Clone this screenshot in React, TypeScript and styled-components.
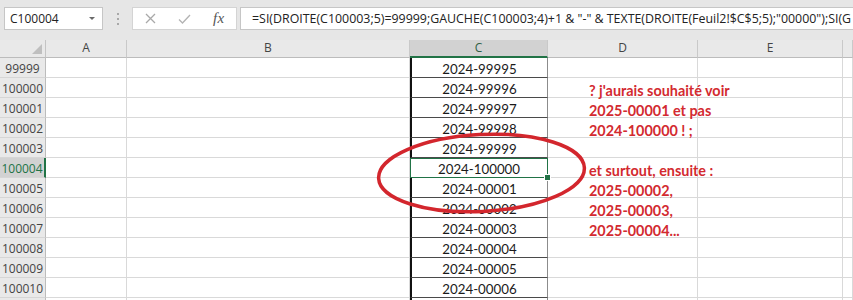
import React from "react";
import styled, { createGlobalStyle, css } from "styled-components";

const GlobalStyle = createGlobalStyle`
  html, body { margin: 0; padding: 0; background: #ffffff; }
  body {
    width: 853px;
    height: 300px;
    overflow: hidden;
    font-family: "Open Sans", "Liberation Sans", sans-serif;
  }
`;

const GREEN = "#217346";

const Page = styled.div`
  width: 853px;
  height: 300px;
  overflow: hidden;
  display: flex;
  flex-direction: column;
  background: #ffffff;
`;

const FormulaBar = styled.div`
  flex: 0 0 40px;
  box-sizing: border-box;
  background: #e6e6e6;
  display: flex;
  align-items: flex-start;
  padding: 7px 0 0 4px;
  overflow: hidden;
`;

const NameBox = styled.div`
  flex: 0 0 99px;
  height: 23px;
  box-sizing: border-box;
  background: #ffffff;
  border: 1px solid #c6c6c6;
  display: flex;
  align-items: center;
  justify-content: space-between;
  padding: 0 7px 0 5px;
  font-size: 12px;
  line-height: 16px;
  color: #222222;
`;

const DropArrow = styled.span`
  width: 0;
  height: 0;
  border-left: 3px solid transparent;
  border-right: 3px solid transparent;
  border-top: 3px solid #6a6a6a;
`;

const Grip = styled.div`
  flex: 0 0 29px;
  height: 23px;
  display: flex;
  flex-direction: column;
  align-items: center;
  justify-content: center;
  gap: 3px;
`;

const GripDot = styled.span`
  width: 2px;
  height: 2px;
  background: #a8a8a8;
`;

const ButtonBox = styled.div`
  flex: 0 0 105px;
  height: 23px;
  box-sizing: border-box;
  background: #ffffff;
  border: 1px solid #d4d4d4;
  display: flex;
  align-items: center;
`;

const BarButton = styled.div`
  flex: 1 1 0;
  height: 100%;
  display: flex;
  align-items: center;
  justify-content: center;
`;

const FxLabel = styled.span`
  font-family: "Liberation Serif", "DejaVu Serif", serif;
  font-style: italic;
  font-size: 15px;
  color: #555555;
  letter-spacing: 0.5px;
`;

const FormulaInput = styled.div`
  flex: 1 0 auto;
  margin-left: 3px;
  margin-right: -30px;
  height: 23px;
  box-sizing: border-box;
  background: #ffffff;
  border: 1px solid #c6c6c6;
  padding: 0 0 0 11px;
  display: flex;
  align-items: center;
  font-size: 12.4px;
  line-height: 16px;
  color: #222222;
  white-space: nowrap;
  overflow: hidden;
`;

const Sheet = styled.div`
  position: relative;
  flex: 1 1 auto;
  display: grid;
  grid-template-columns: 46px 81px 283px 138px 150px 145px 1fr;
  grid-template-rows: 18px;
  grid-auto-rows: 20px;
  overflow: hidden;
  background: #ffffff;
`;

const Corner = styled.div`
  box-sizing: border-box;
  background: #e9e9e9;
  border-right: 1px solid #c4c4c4;
  border-bottom: 1px solid #bcbcbc;
  display: flex;
  justify-content: flex-end;
  align-items: flex-end;
  padding: 0 3px 3px 0;
`;

const CornerTriangle = styled.span`
  width: 0;
  height: 0;
  border-left: 10px solid transparent;
  border-bottom: 10px solid #bfbfbf;
`;

const ColHeader = styled.div<{ $selected?: boolean }>`
  box-sizing: border-box;
  background: #e9e9e9;
  border-right: 1px solid #c9c9c9;
  border-bottom: 1px solid #bcbcbc;
  text-align: center;
  font-size: 12px;
  line-height: 16px;
  color: #444444;
  ${(p) =>
    p.$selected &&
    css`
      background: #d2d2d2;
      color: #2f5f45;
      border-bottom: 2px solid ${GREEN};
    `}
`;

const RowHeader = styled.div<{ $selected?: boolean }>`
  box-sizing: border-box;
  background: #e9e9e9;
  border-right: 1px solid #bcbcbc;
  border-bottom: 1px solid #d6d6d6;
  text-align: center;
  font-size: 12px;
  line-height: 16px;
  padding-top: 3px;
  color: #444444;
  white-space: nowrap;
  overflow: hidden;
  ${(p) =>
    p.$selected &&
    css`
      background: #d2d2d2;
      color: ${GREEN};
      border-right: 2px solid ${GREEN};
    `}
`;

const Cell = styled.div`
  box-sizing: border-box;
  border-right: 1px solid #d9d9d9;
  border-bottom: 1px solid #d9d9d9;
`;

const CCell = styled.div<{ $active?: boolean }>`
  position: relative;
  box-sizing: border-box;
  border-left: 2px solid #111111;
  border-right: 1px solid #8c8c8c;
  border-bottom: 1px solid #4a4a4a;
  text-align: center;
  font-family: "Lato", "Open Sans", sans-serif;
  font-size: 13.3px;
  line-height: 16px;
  padding-top: 3px;
  color: #1a1a1a;
  white-space: nowrap;
  ${(p) =>
    p.$active &&
    css`
      border-left: 1px solid ${GREEN};
      border-right: 1px solid ${GREEN};
      border-bottom: 1px solid ${GREEN};
      box-shadow: inset 0 1px 0 ${GREEN};
      &::after {
        content: "";
        position: absolute;
        right: -4px;
        bottom: -4px;
        width: 5px;
        height: 5px;
        background: ${GREEN};
        border: 1px solid #ffffff;
        z-index: 2;
      }
    `}
`;

const NoteCell = styled.div`
  box-sizing: border-box;
  border-right: 1px solid #d9d9d9;
  border-bottom: 1px solid #d9d9d9;
  padding: 4px 0 0 41px;
  font-family: "Lato", "Open Sans", sans-serif;
  font-weight: 700;
  font-size: 14.4px;
  line-height: 17px;
  color: #d32a30;
  white-space: nowrap;
  overflow: visible;
`;

const Overlay = styled.svg`
  position: absolute;
  left: 0;
  top: 0;
  width: 853px;
  height: 260px;
  pointer-events: none;
  overflow: visible;
`;

type Row = { n: string; c: string; note?: string; active?: boolean };

const rows: Row[] = [
  { n: "99999", c: "2024-99995" },
  { n: "100000", c: "2024-99996", note: "? j'aurais souhaité voir" },
  { n: "100001", c: "2024-99997", note: "2025-00001 et pas" },
  { n: "100002", c: "2024-99998", note: "2024-100000 ! ;" },
  { n: "100003", c: "2024-99999" },
  { n: "100004", c: "2024-100000", note: "et surtout, ensuite :", active: true },
  { n: "100005", c: "2024-00001", note: "2025-00002," },
  { n: "100006", c: "2024-00002", note: "2025-00003," },
  { n: "100007", c: "2024-00003", note: "2025-00004..." },
  { n: "100008", c: "2024-00004" },
  { n: "100009", c: "2024-00005" },
  { n: "100010", c: "2024-00006" },
  { n: "", c: "" },
];

const columns = ["A", "B", "C", "D", "E", ""];

export default function App() {
  return (
    <>
      <GlobalStyle />
      <Page>
        <FormulaBar>
          <NameBox>
            <span>C100004</span>
            <DropArrow />
          </NameBox>
          <Grip>
            <GripDot />
            <GripDot />
            <GripDot />
          </Grip>
          <ButtonBox>
            <BarButton>
              <svg width="11" height="11" viewBox="0 0 11 11">
                <path d="M1 1 L10 10 M10 1 L1 10" stroke="#a9a9a9" strokeWidth="1.3" fill="none" />
              </svg>
            </BarButton>
            <BarButton>
              <svg width="13" height="10" viewBox="0 0 13 10">
                <path d="M1 5.5 L4.5 9 L12 1" stroke="#b3b3b3" strokeWidth="1.3" fill="none" />
              </svg>
            </BarButton>
            <BarButton>
              <FxLabel>fx</FxLabel>
            </BarButton>
          </ButtonBox>
          <FormulaInput>
            =SI(DROITE(C100003;5)=99999;GAUCHE(C100003;4)+1 &amp; "-" &amp; TEXTE(DROITE(Feuil2!$C$5;5);"00000");SI(G
          </FormulaInput>
        </FormulaBar>
        <Sheet>
          <Corner>
            <CornerTriangle />
          </Corner>
          {columns.map((col, i) => (
            <ColHeader key={i} $selected={col === "C"}>
              {col}
            </ColHeader>
          ))}
          {rows.map((r, i) => (
            <React.Fragment key={i}>
              <RowHeader $selected={r.active}>{r.n}</RowHeader>
              <Cell />
              <Cell />
              <CCell $active={r.active}>{r.c}</CCell>
              <NoteCell>{r.note ?? ""}</NoteCell>
              <Cell />
              <Cell />
            </React.Fragment>
          ))}
          <Overlay viewBox="0 0 853 260">
            <ellipse
              cx="481.5"
              cy="133"
              rx="103"
              ry="38.5"
              transform="rotate(-3 481.5 133)"
              fill="none"
              stroke="#d3262d"
              strokeWidth="3.5"
            />
          </Overlay>
        </Sheet>
      </Page>
    </>
  );
}
